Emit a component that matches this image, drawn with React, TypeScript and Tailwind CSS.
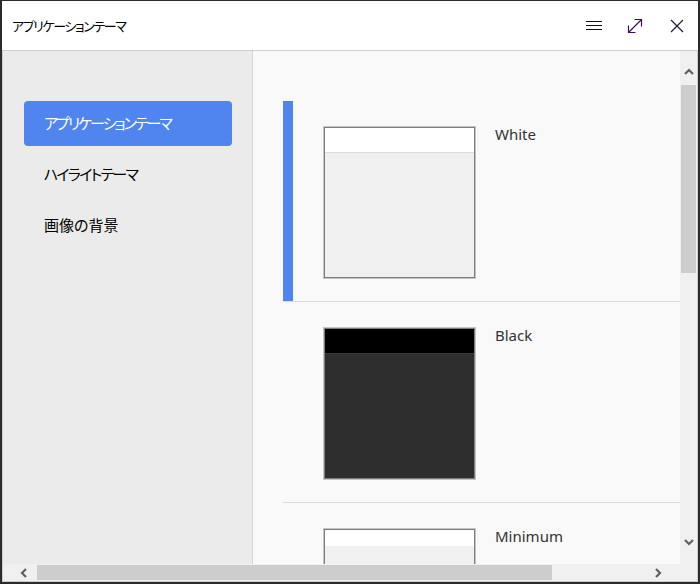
import React from 'react'

const themes = [
  { name: 'White', head: 'h-[25px] bg-white border-b border-[#dcdcdc]', body: 'bg-[#f0f0f0]', selected: true },
  { name: 'Black', head: 'h-[25px] bg-black border-b border-[#3a3a3a]', body: 'bg-[#2e2e2e]', selected: false },
  { name: 'Minimum', head: 'h-[16px] bg-white', body: 'bg-[#f0f0f0]', selected: false },
]

const menu = [
  { label: 'アプリケーションテーマ', track: 'tracking-[-2px]' },
  { label: 'ハイライトテーマ', track: 'tracking-[-1.7px]' },
  { label: '画像の背景', track: '' },
]

const jp = { fontFamily: '"Noto Sans CJK JP", sans-serif', fontFeatureSettings: '"palt"' }

function Chevron({ dir }: { dir: 'up' | 'down' | 'left' | 'right' }) {
  const pts = {
    up: '1,7 5,3 9,7',
    down: '1,3 5,7 9,3',
    left: '7,1 3,5 7,9',
    right: '3,1 7,5 3,9',
  }[dir]
  return (
    <svg width="10" height="10" viewBox="0 0 10 10">
      <polyline points={pts} fill="none" stroke="#606060" strokeWidth="2.2" />
    </svg>
  )
}

export default function App() {
  return (
    <div className="w-[700px] h-[584px] flex flex-col bg-white border-t border-l-2 border-r-2 border-b-2 border-[#2b2b2b] overflow-hidden"
      style={{ fontFamily: '"Noto Sans", "Noto Sans CJK JP", sans-serif' }}>
      {/* title bar */}
      <div className="h-[49px] shrink-0 flex items-center pl-[10px] pr-[14px]">
        <span className="text-[13px] tracking-[-1.4px] text-black" style={jp}>アプリケーションテーマ</span>
        <div className="ml-auto flex items-center">
          <svg width="18" height="12" viewBox="0 0 18 12" className="mr-[24px]">
            <path d="M1 1.5H17M1 5.5H17M1 9.5H17" stroke="#111" strokeWidth="1.2" />
          </svg>
          <svg width="16" height="16" viewBox="0 0 16 16" className="mr-[27px]">
            <path d="M1.5 14.5L14.5 1.5M7.5 1.5H14.5V8.5M1.5 7.5V14.5H8.5" fill="none" stroke="#3a0f52" strokeWidth="1.2" />
          </svg>
          <svg width="14" height="14" viewBox="0 0 14 14">
            <path d="M1 1L13 13M13 1L1 13" stroke="#1c1c3a" strokeWidth="1.2" />
          </svg>
        </div>
      </div>

      {/* content frame */}
      <div className="flex-1 min-h-0 flex flex-col border border-[#cccccc]">
        <div className="flex-1 min-h-0 flex">
          <aside className="w-[250px] shrink-0 bg-[#ebebeb] border-r border-[#d6d6d6] pt-[50px] pl-[21px] pr-[20px] flex flex-col gap-[6px]">
            {menu.map((m, i) => (
              <div key={m.label}
                className={`h-[45px] rounded-[4px] pl-[20px] flex items-center text-[15px] ${m.track} ${i === 0 ? 'bg-[#5085ef] text-white' : 'text-black'}`}
                style={jp}>
                {m.label}
              </div>
            ))}
          </aside>

          <main className="flex-1 min-w-0 bg-[#f9f9f9] overflow-hidden pt-[50px] pl-[30px]">
            {themes.map(t => (
              <div key={t.name} className="h-[201px] shrink-0 flex border-b border-[#dcdcdc]">
                <div className={`w-[10px] shrink-0 ${t.selected ? 'bg-[#5085ef]' : ''}`} />
                <div className="pl-[31px] pt-[26px] flex items-start">
                  <div className="w-[151px] h-[151px] shrink-0 flex flex-col border border-[#7d7d7d] outline outline-1 outline-[#c4c4c4]">
                    <div className={`shrink-0 ${t.head}`} />
                    <div className={`flex-1 ${t.body}`} />
                  </div>
                  <span className="ml-[20px] -mt-[3px] text-[15px] leading-[20px] text-[#333333]">{t.name}</span>
                </div>
              </div>
            ))}
          </main>

          <div className="w-[17px] shrink-0 bg-[#f0f0f0] flex flex-col">
            <div className="h-[34px] flex items-center justify-center pt-[8px]"><Chevron dir="up" /></div>
            <div className="h-[188px] mx-[1px] bg-[#cdcdcd]" />
            <div className="flex-1" />
            <div className="h-[44px] flex items-center justify-center"><Chevron dir="down" /></div>
          </div>
        </div>

        <div className="h-[17px] shrink-0 flex bg-[#f0f0f0]">
          <div className="flex-1 flex">
            <div className="w-[34px] flex items-center justify-center pl-[8px]"><Chevron dir="left" /></div>
            <div className="w-[515px] my-[1px] bg-[#cdcdcd]" />
            <div className="flex-1" />
            <div className="w-[44px] flex items-center justify-center"><Chevron dir="right" /></div>
          </div>
          <div className="w-[17px]" />
        </div>
      </div>
    </div>
  )
}
